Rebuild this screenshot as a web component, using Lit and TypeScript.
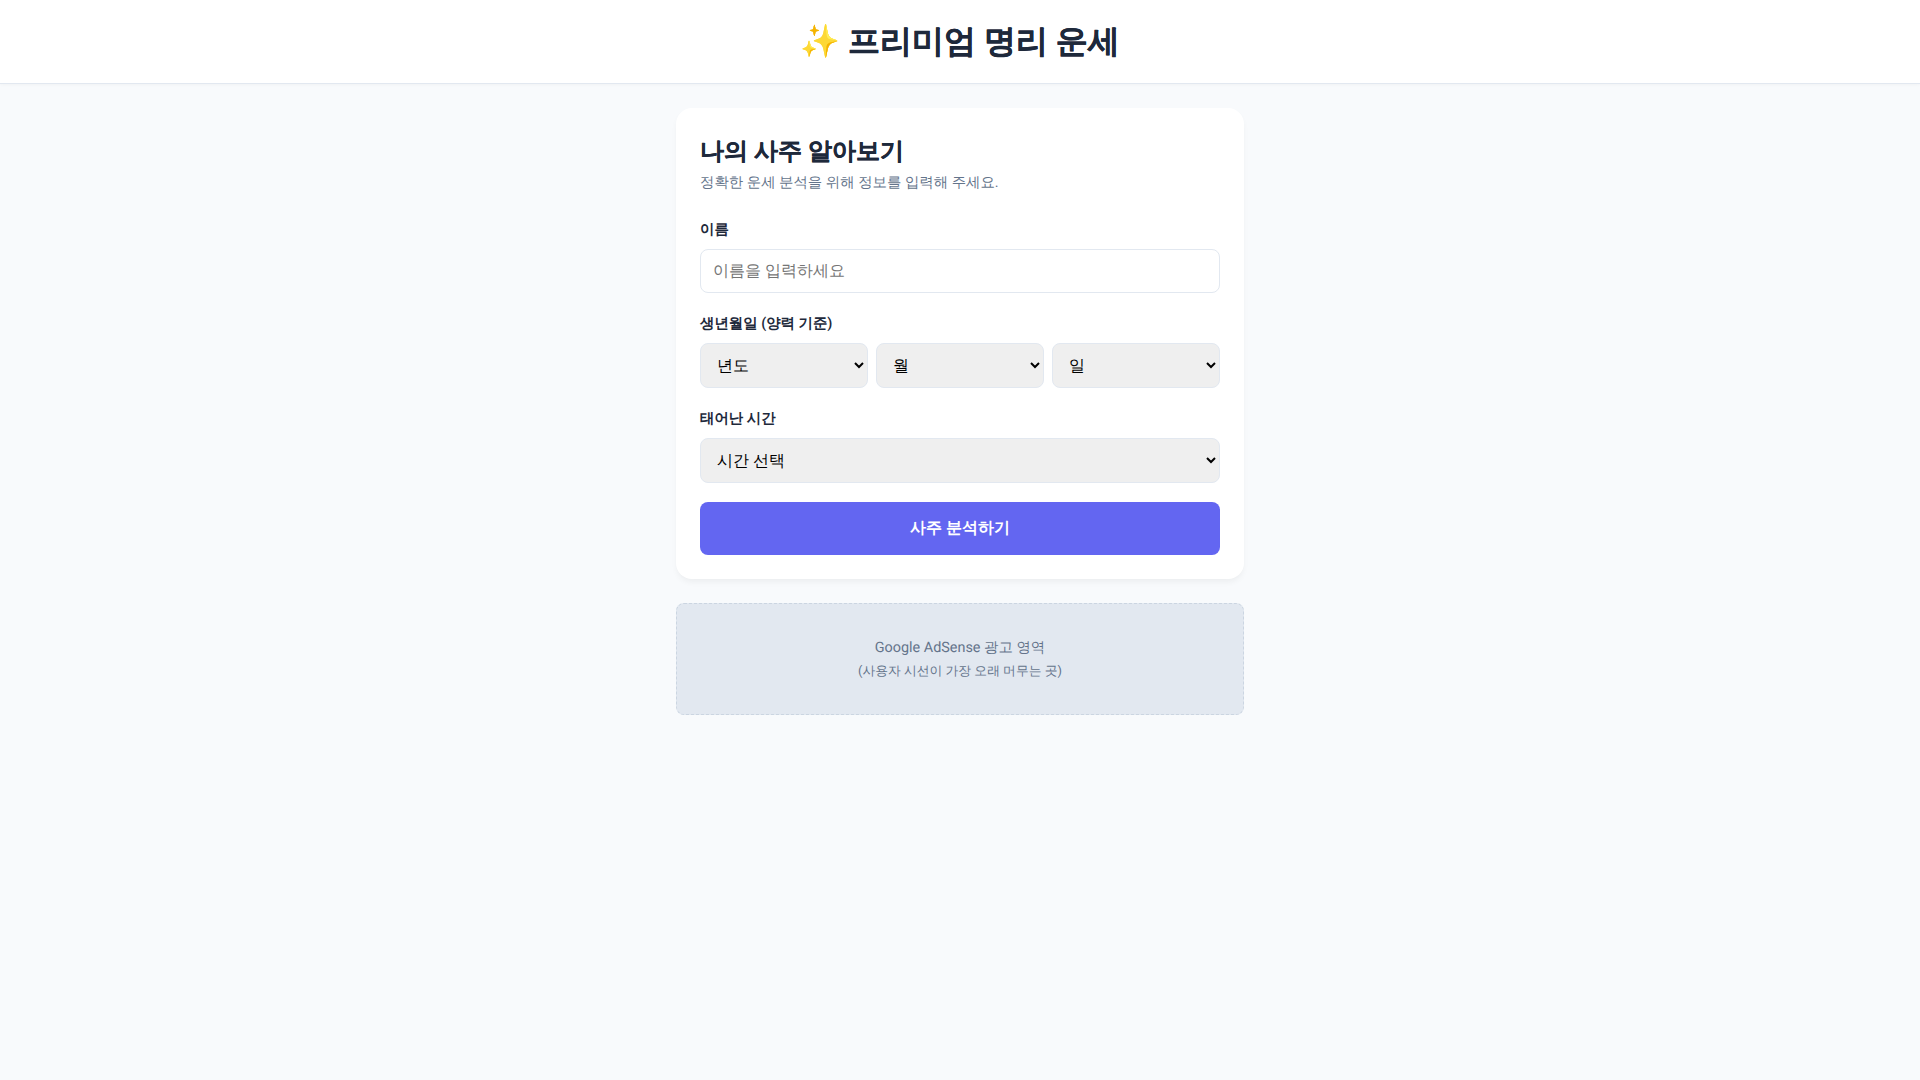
import { LitElement, html, css } from "lit";
import { customElement } from "lit/decorators.js";

@customElement("app-root")
export class AppRoot extends LitElement {
  static styles = css`
    :host {
      display: block;
      min-height: 1080px;
      background: #f8fafc;
      color: #1e293b;
      font-family: Roboto, sans-serif;
      line-height: 1.6;
      text-rendering: geometricPrecision;
    }
    * { box-sizing: border-box; }
    header {
      background: #fff;
      text-align: center;
      padding: 16px;
      border-bottom: 1px solid #e2e8f0;
      box-shadow: 0 1px 3px rgba(0,0,0,0.03);
    }
    h1 { margin: 0; font-size: 32px; font-weight: 700; line-height: 51.2px; -webkit-text-stroke: 0.3px #1e293b; }
    main {
      width: 600px;
      margin: 0 auto;
      padding: 24px 16px;
      display: flex;
      flex-direction: column;
      gap: 24px;
    }
    .card {
      background: #fff;
      border-radius: 16px;
      padding: 24px;
      box-shadow: 0 4px 6px -1px rgba(0,0,0,0.05);
    }
    h2 { margin: 0; font-size: 24px; font-weight: 700; -webkit-text-stroke: 0.3px #1e293b; }
    .sub { margin: 0 0 24px; font-size: 14.4px; color: #64748b; }
    .group { margin-bottom: 19.2px; }
    label { display: block; font-size: 14.4px; font-weight: 600; margin-bottom: 8px; }
    input, select {
      width: 100%;
      font-family: inherit;
      font-size: 16px;
      border: 1px solid #e2e8f0;
      border-radius: 8px;
      padding: 12px;
      text-rendering: geometricPrecision;
    }
    input { height: 44px; background: #fff; }
    input::placeholder { color: #757575; }
    select { height: 45px; padding: 11px 12px 13px; }
    .row { display: flex; gap: 8px; }
    .row select { flex: 1; min-width: 0; }
    button {
      display: block;
      width: 100%;
      height: 53px;
      border: none;
      border-radius: 8px;
      background: #6366f1;
      color: #fff;
      font-family: inherit;
      font-size: 16px;
      font-weight: 700;
      text-rendering: geometricPrecision;
    }
    .ad {
      padding: 32px;
      background: #e2e8f0;
      border: 1px dashed #cbd5e1;
      border-radius: 8px;
      color: #64748b;
      font-size: 14.4px;
      text-align: center;
    }
    .ad small { font-size: 12.8px; line-height: 1; }
  `;

  render() {
    return html`
      <header><h1>✨ 프리미엄 명리 운세</h1></header>
      <main>
        <section class="card">
          <h2>나의 사주 알아보기</h2>
          <p class="sub">정확한 운세 분석을 위해 정보를 입력해 주세요.</p>
          <div class="group">
            <label>이름</label>
            <input type="text" placeholder="이름을 입력하세요" />
          </div>
          <div class="group">
            <label>생년월일 (양력 기준)</label>
            <div class="row">
              <select><option>년도</option></select>
              <select><option>월</option></select>
              <select><option>일</option></select>
            </div>
          </div>
          <div class="group">
            <label>태어난 시간</label>
            <select><option>시간 선택</option></select>
          </div>
          <button>사주 분석하기</button>
        </section>
        <aside class="ad">
          Google AdSense 광고 영역<br />
          <small>(사용자 시선이 가장 오래 머무는 곳)</small>
        </aside>
      </main>
    `;
  }
}
